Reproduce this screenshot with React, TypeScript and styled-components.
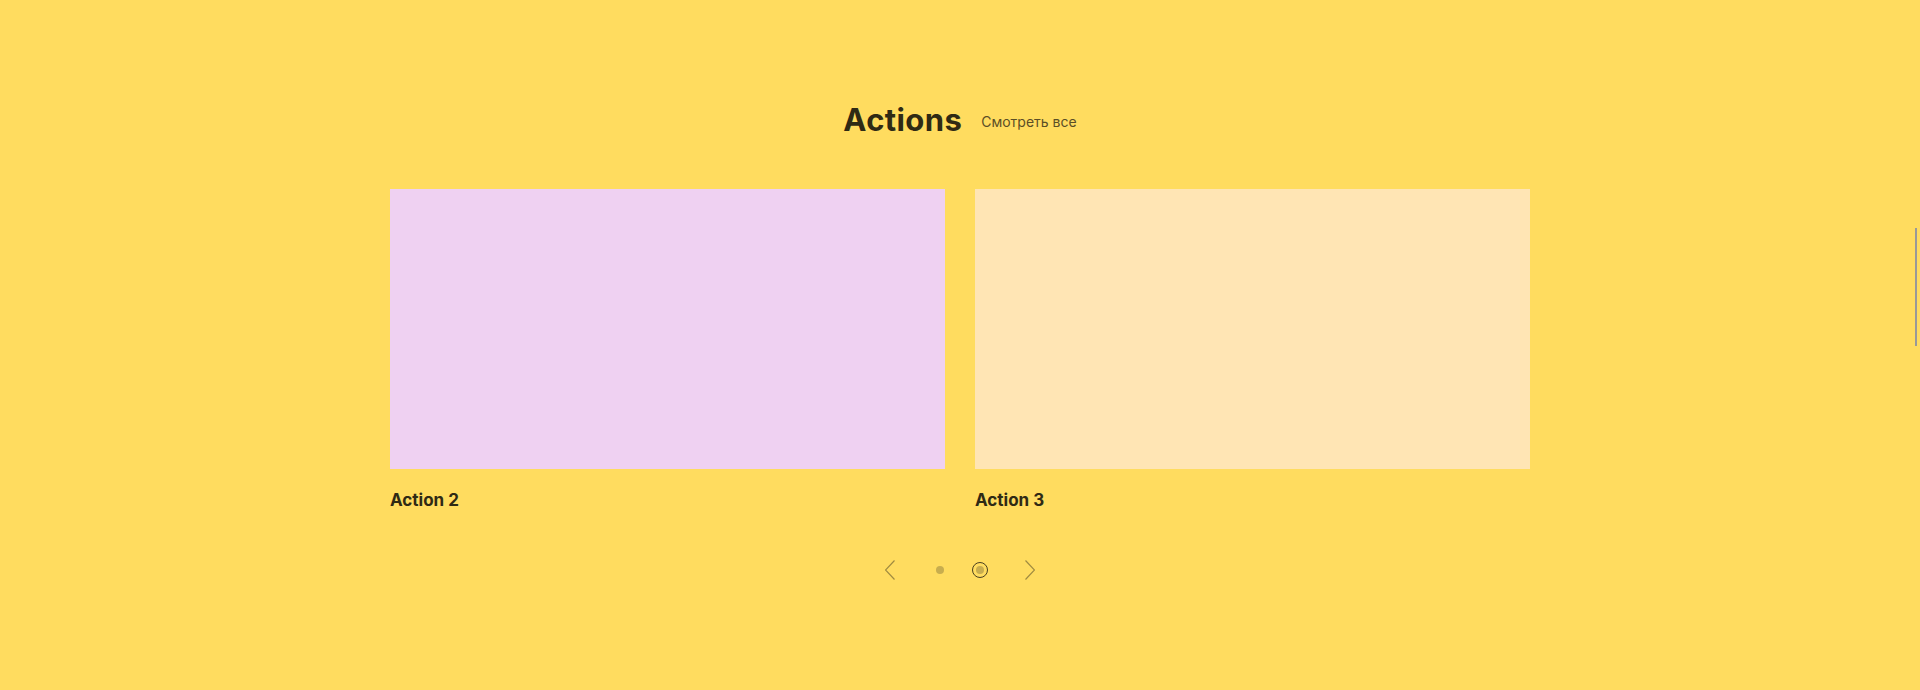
import React from "react";
import styled, { createGlobalStyle } from "styled-components";

const Global = createGlobalStyle`
  html, body { margin: 0; padding: 0; background: #ffdc5f; }
  body { font-family: "Inter", "Noto Sans", sans-serif; color: #2f2a14; }
`;

const Page = styled.div`
  width: 1920px;
  height: 690px;
  background: #ffdc5f;
  position: relative;
  overflow: hidden;
`;

const Section = styled.section`
  width: 1140px;
  margin: 0 auto;
  padding-top: 100px;
  display: flex;
  flex-direction: column;
  align-items: center;
`;

const Header = styled.div`
  display: flex;
  align-items: center;
  gap: 19px;
  height: 40px;
`;

const Title = styled.h2`
  margin: 0;
  font-size: 31px;
  font-weight: 700;
  line-height: 40px;
  letter-spacing: 0.4px;
  color: #2f2a14;
`;

const SeeAll = styled.a`
  margin-top: 3px;
  font-size: 14px;
  line-height: 18px;
  color: #5b4e26;
  text-decoration: none;
`;

const Cards = styled.div`
  margin-top: 49px;
  width: 100%;
  display: grid;
  grid-template-columns: 1fr 1fr;
  gap: 30px;
`;

const Card = styled.div`
  display: flex;
  flex-direction: column;
`;

const Cover = styled.div<{ $bg: string }>`
  height: 280px;
  background: ${(p) => p.$bg};
`;

const CardTitle = styled.div`
  margin-top: 20px;
  font-size: 17px;
  font-weight: 700;
  line-height: 22px;
  color: #2f2a14;
`;

const Nav = styled.div`
  margin-top: 49px;
  display: flex;
  align-items: center;
  height: 20px;
`;

const Arrow = styled.button`
  width: 10px;
  height: 20px;
  padding: 0;
  border: 0;
  background: none;
  display: flex;
  align-items: center;
  justify-content: center;
  cursor: pointer;
`;

const Dots = styled.div`
  display: flex;
  align-items: center;
  gap: 24px;
  margin: 0 37px;
`;

const Dot = styled.span<{ $active?: boolean }>`
  width: 16px;
  height: 16px;
  box-sizing: border-box;
  border-radius: 50%;
  border: 1.5px solid ${(p) => (p.$active ? "#4a4020" : "transparent")};
  display: flex;
  align-items: center;
  justify-content: center;
  &::after {
    content: "";
    width: 8px;
    height: 8px;
    border-radius: 50%;
    background: #c8ad4e;
  }
`;

const Scrollbar = styled.div`
  position: absolute;
  right: 3px;
  top: 228px;
  width: 2px;
  height: 118px;
  background: #999;
`;

const Chevron = ({ dir }: { dir: "left" | "right" }) => (
  <svg width="10" height="20" viewBox="0 0 10 20" fill="none">
    <path
      d={dir === "left" ? "M9.5 0.5 L0.5 10 L9.5 19.5" : "M0.5 0.5 L9.5 10 L0.5 19.5"}
      stroke="#a08b40"
      strokeWidth="1.2"
    />
  </svg>
);

export default function App() {
  return (
    <Page>
      <Global />
      <Section>
        <Header>
          <Title>Actions</Title>
          <SeeAll href="#">Смотреть все</SeeAll>
        </Header>
        <Cards>
          <Card>
            <Cover $bg="#efd1f2" />
            <CardTitle>Action 2</CardTitle>
          </Card>
          <Card>
            <Cover $bg="#ffe5b4" />
            <CardTitle>Action 3</CardTitle>
          </Card>
        </Cards>
        <Nav>
          <Arrow aria-label="prev">
            <Chevron dir="left" />
          </Arrow>
          <Dots>
            <Dot />
            <Dot $active />
          </Dots>
          <Arrow aria-label="next">
            <Chevron dir="right" />
          </Arrow>
        </Nav>
      </Section>
      <Scrollbar />
    </Page>
  );
}
